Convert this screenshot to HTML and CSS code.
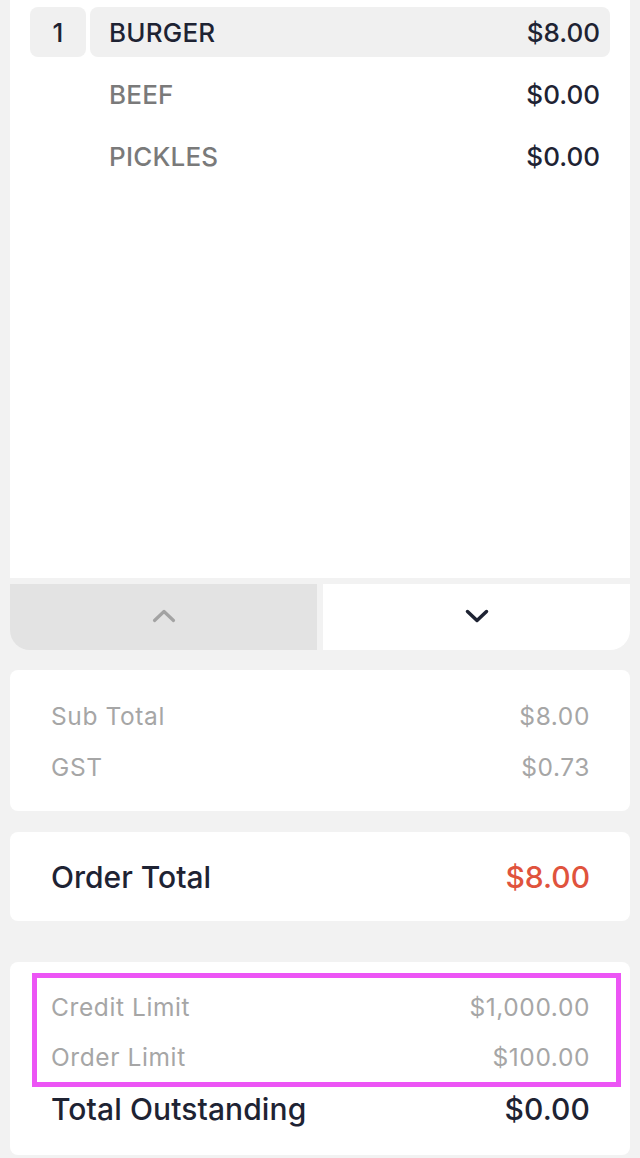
FILE: index.html
```html
<!DOCTYPE html>
<html lang="en">
<head>
<meta charset="utf-8">
<title>Order</title>
<link rel="stylesheet" href="styles.css">
</head>
<body>
<div class="page">
  <section class="items">
    <div class="item selected">
      <div class="qty">1</div>
      <div class="line"><span class="name main">BURGER</span><span class="price">$8.00</span></div>
    </div>
    <div class="item">
      <div class="qty"></div>
      <div class="line"><span class="name">BEEF</span><span class="price">$0.00</span></div>
    </div>
    <div class="item">
      <div class="qty"></div>
      <div class="line"><span class="name">PICKLES</span><span class="price">$0.00</span></div>
    </div>
  </section>
  <div class="pager">
    <button class="page-btn up" type="button" aria-label="Scroll up">
      <svg width="24" height="14" viewBox="0 0 24 14"><polyline points="2.5,11.5 12,2.5 21.5,11.5" fill="none" stroke="#a3a3a3" stroke-width="3.2" stroke-linecap="round" stroke-linejoin="round"/></svg>
    </button>
    <button class="page-btn down" type="button" aria-label="Scroll down">
      <svg width="24" height="14" viewBox="0 0 24 14"><polyline points="2.5,2.5 12,11.5 21.5,2.5" fill="none" stroke="#1e2333" stroke-width="3.5" stroke-linecap="round" stroke-linejoin="round"/></svg>
    </button>
  </div>
  <section class="card summary">
    <div class="row muted"><span>Sub Total</span><span>$8.00</span></div>
    <div class="row muted"><span>GST</span><span>$0.73</span></div>
  </section>
  <section class="card total">
    <div class="row big"><span>Order Total</span><span class="red">$8.00</span></div>
  </section>
  <section class="card account">
    <div class="highlight">
      <div class="row muted"><span>Credit Limit</span><span>$1,000.00</span></div>
      <div class="row muted"><span>Order Limit</span><span>$100.00</span></div>
    </div>
    <div class="row outstanding"><span>Total Outstanding</span><span>$0.00</span></div>
  </section>
</div>
</body>
</html>
```
FILE: styles.css
```css
* { box-sizing: border-box; }
html, body {
  margin: 0;
  padding: 0;
  background: #f2f2f2;
}
body {
  font-family: Inter, "Noto Sans", "Liberation Sans", sans-serif;
  color: #1e2333;
}
.page {
  padding: 0 10px;
  display: flex;
  flex-direction: column;
}
.items {
  background: #ffffff;
  height: 578px;
  padding: 7px 20px 0;
  display: flex;
  flex-direction: column;
  gap: 12px;
}
.item {
  display: flex;
  gap: 4px;
  height: 50px;
}
.qty {
  width: 56px;
  border-radius: 8px;
  display: flex;
  align-items: center;
  justify-content: center;
  font-size: 26px;
  font-weight: 500;
  color: #1e2333;
}
.line {
  flex: 1;
  border-radius: 8px;
  display: flex;
  align-items: center;
  justify-content: space-between;
  padding: 0 10px 0 19px;
  font-size: 26px;
  font-weight: 500;
  letter-spacing: 0.2px;
}
.selected .qty,
.selected .line {
  background: #f0f0f0;
}
.name { color: #7a7a7a; }
.name.main { color: #1e2333; }
.price { color: #1e2333; letter-spacing: 0; }
.pager {
  display: flex;
  gap: 6px;
  margin-top: 6px;
  height: 66px;
}
.page-btn {
  flex: 1;
  border: 0;
  padding: 0;
  display: flex;
  align-items: center;
  justify-content: center;
  padding-bottom: 2px;
}
.page-btn.up {
  background: #e3e3e3;
  border-radius: 0 0 0 20px;
}
.page-btn.down {
  background: #ffffff;
  border-radius: 0 0 20px 0;
}
.card {
  background: #ffffff;
  border-radius: 8px;
}
.summary {
  margin-top: 20px;
  height: 141px;
  padding: 20px 40px 0 41px;
}
.row {
  display: flex;
  justify-content: space-between;
  align-items: center;
}
.muted {
  height: 51px;
  font-size: 24.5px;
  letter-spacing: 0.6px;
  color: #a6a6a6;
}
.total {
  margin-top: 21px;
  height: 89px;
  padding: 0 40px 0 41px;
  display: flex;
  flex-direction: column;
  justify-content: center;
}
.big {
  font-size: 30px;
  font-weight: 500;
  color: #1e2333;
}
.red { color: #e0533d; }
.account {
  margin-top: 41px;
  height: 193px;
  padding: 11px 40px 0 22px;
}
.highlight {
  border: 5px solid #ec55f5;
  padding: 4px 26px 0 14px;
  margin-right: -31px;
  height: 114px;
}
.highlight .muted {
  height: 50px;
}
.outstanding {
  height: 44px;
  padding: 0 0 0 19px;
  font-size: 30px;
  font-weight: 500;
  letter-spacing: 0.1px;
  color: #1e2333;
}
```
